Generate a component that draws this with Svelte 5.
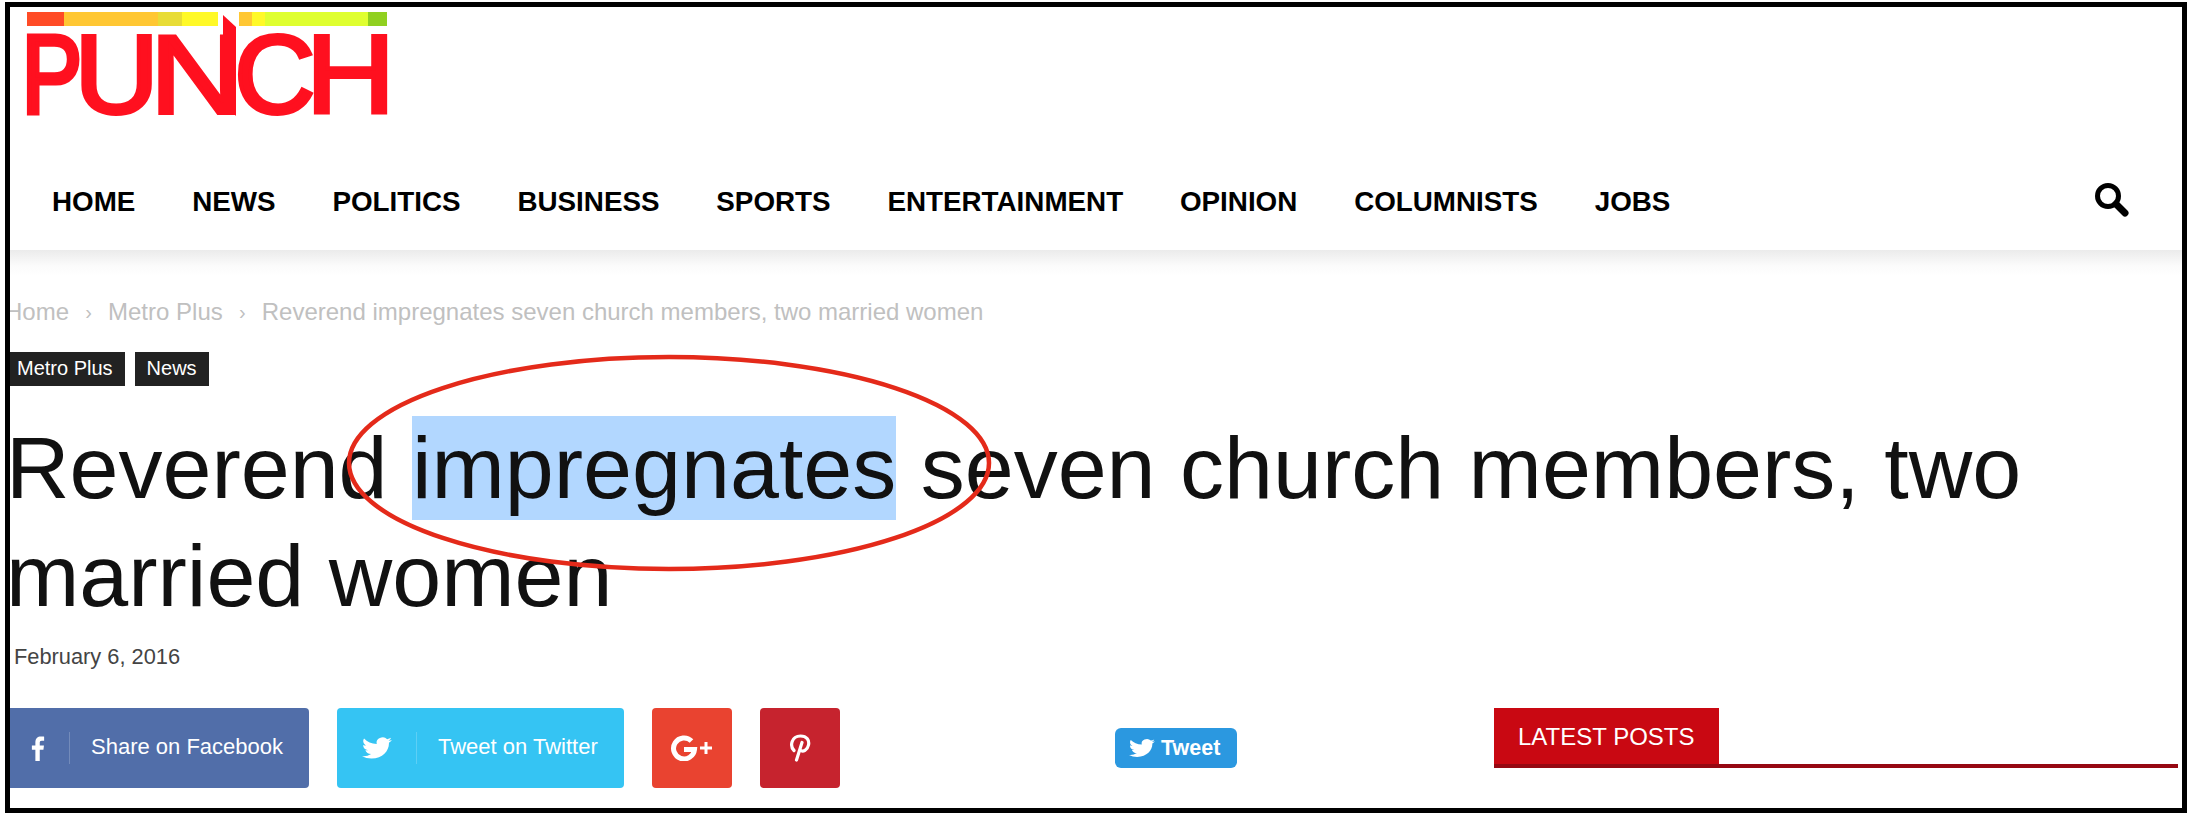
<script>
	const navItems = ['HOME', 'NEWS', 'POLITICS', 'BUSINESS', 'SPORTS', 'ENTERTAINMENT', 'OPINION', 'COLUMNISTS', 'JOBS'];
	const logoLetters = [
		{ ch: 'P', x: -5.6, sx: 0.82, w: 5 },
		{ ch: 'U', x: 47.5, sx: 1.05, w: 4 },
		{ ch: 'N', x: 122.9, sx: 1.17, w: 4 },
		{ ch: 'C', x: 207.3, sx: 1.01, w: 4 },
		{ ch: 'H', x: 279, sx: 1.11, w: 4 }
	];
	const birdPath =
		'M23.95 4.57a10 10 0 0 1-2.82.77 4.96 4.96 0 0 0 2.16-2.72c-.95.56-2 .96-3.12 1.19a4.92 4.92 0 0 0-8.38 4.48C7.69 8.1 4.07 6.13 1.64 3.16a4.82 4.82 0 0 0-.67 2.48c0 1.71.87 3.21 2.19 4.1a4.9 4.9 0 0 1-2.23-.62v.06a4.92 4.92 0 0 0 3.95 4.83 5 5 0 0 1-2.21.08 4.94 4.94 0 0 0 4.6 3.42A9.87 9.87 0 0 1 0 19.54a14 14 0 0 0 7.56 2.21c9.05 0 14-7.5 14-13.98 0-.21 0-.42-.02-.63a9.94 9.94 0 0 0 2.41-2.57z';
</script>

<div class="frame">
	<div class="page">
		<header class="logo-row">
			<svg class="logo" width="362" height="106" viewBox="0 0 362 106" role="img" aria-label="Punch">
				<rect x="0" y="0" width="37" height="14" fill="#ff4b26" />
				<rect x="37" y="0" width="94" height="14" fill="#ffc733" />
				<rect x="131" y="0" width="24" height="14" fill="#e8dc36" />
				<rect x="155" y="0" width="36" height="14" fill="#fff928" />
				<rect x="212" y="0" width="13" height="14" fill="#ffc733" />
				<rect x="225" y="0" width="13" height="14" fill="#fff928" />
				<rect x="238" y="0" width="103" height="14" fill="#dfff30" />
				<rect x="341" y="0" width="19" height="14" fill="#90d020" />
				{#each logoLetters as l}
					<text class="logo-text" stroke-width={l.w} transform="translate({l.x} 101) scale({l.sx} 1)">{l.ch}</text>
				{/each}
				<polygon points="196,3 209,15 209,104 196,90" fill="#ff101f" />
			</svg>
		</header>

		<nav class="nav">
			<ul>
				{#each navItems as item}
					<li>{item}</li>
				{/each}
			</ul>
			<svg class="search" width="34" height="34" viewBox="0 0 34 34" aria-hidden="true">
				<circle cx="13" cy="13" r="10.500" fill="none" stroke="#000" stroke-width="5" />
				<line x1="21" y1="21" x2="30" y2="30" stroke="#000" stroke-width="7" stroke-linecap="round" />
			</svg>
		</nav>

		<div class="breadcrumb">
			<span>Home</span><i>›</i><span>Metro Plus</span><i>›</i><span>Reverend impregnates seven church members, two married women</span>
		</div>

		<div class="tags">
			<span>Metro Plus</span>
			<span>News</span>
		</div>

		<h1>Reverend <span class="selected">impregnates</span> seven church members, two married women</h1>

		<div class="date">February 6, 2016</div>

		<div class="bottom">
			<div class="share">
				<div class="btn facebook">
					<span class="ico">
						<svg width="14" height="25" viewBox="0 0 16 28" preserveAspectRatio="none" aria-hidden="true">
							<path fill="#fff" d="M5 28V15.5H1V10.5h4V7c0-4.300 2.600-6.500 6.300-6.500 1.800 0 3.300.1 3.700.2v4.500h-2.600c-2 0-2.400 1-2.400 2.400v2.900h4.800l-.6 5h-4.200V28z" />
						</svg>
					</span>
					<span class="label">Share on Facebook</span>
				</div>
				<div class="btn twitter">
					<span class="ico">
						<svg width="30" height="26" viewBox="0 0 24 24" preserveAspectRatio="none" aria-hidden="true">
							<path fill="#fff" d={birdPath} />
						</svg>
					</span>
					<span class="label">Tweet on Twitter</span>
				</div>
				<div class="btn square gplus">
					<svg width="42" height="26" viewBox="0 0 42 26" aria-hidden="true">
						<path fill="none" stroke="#fff" stroke-width="5" d="M20.500 6A10.500 10.500 0 1 0 23.500 14.500H13" />
						<path fill="#fff" d="M29 11.500h4.500V7h3v4.500H41v3h-4.500V19h-3v-4.500H29z" />
					</svg>
				</div>
				<div class="btn square pinterest">
					<svg width="22" height="28" viewBox="0 0 22 28" aria-hidden="true">
						<path fill="none" stroke="#fff" stroke-width="3.200" stroke-linecap="round" d="M5 16.500C.5 12 2.500 2 11.500 2c6.500 0 9 4.500 8 9-1 5-5.500 7.500-8.500 5M13 8.500L7.500 26" />
					</svg>
				</div>
			</div>

			<div class="tweet">
				<svg width="26" height="22" viewBox="0 0 24 24" preserveAspectRatio="none" aria-hidden="true">
					<path fill="#fff" d={birdPath} />
				</svg>
				<span>Tweet</span>
			</div>

			<div class="latest">
				<span>LATEST POSTS</span>
			</div>
		</div>

		<svg class="circle" width="660" height="230" viewBox="0 0 660 230" aria-hidden="true">
			<ellipse cx="330" cy="115" rx="320" ry="106" fill="none" stroke="#e42a1a" stroke-width="4.500" />
		</svg>
	</div>
</div>

<style>
	:global(body) {
		margin: 0;
		background: #fff;
		font-family: 'Liberation Sans', Arial, sans-serif;
	}

	.frame {
		box-sizing: border-box;
		width: 2182px;
		height: 811px;
		margin: 2px 0 0 5px;
		border: 5px solid #000;
		overflow: hidden;
	}

	.page {
		position: relative;
		height: 100%;
	}

	.logo-row {
		height: 171px;
		padding: 5px 0 0 17px;
		box-sizing: border-box;
	}

	.logo {
		display: block;
		overflow: visible;
	}

	.logo-text {
		font-family: 'Liberation Sans', Arial, sans-serif;
		font-size: 111px;
		fill: #ff101f;
		stroke: #ff101f;
	}

	.nav {
		position: relative;
		height: 72px;
		display: flex;
		align-items: flex-start;
		justify-content: space-between;
		padding: 5px 53px 0 42px;
		box-sizing: border-box;
		background: #fff;
	}

	/* soft band under the menu */
	.nav::after {
		content: '';
		position: absolute;
		left: 0;
		right: 0;
		top: 100%;
		height: 26px;
		background: linear-gradient(#ebebeb, #fbfbfb 60%, #fff);
	}

	.nav ul {
		display: flex;
		gap: 56.800px;
		margin: 3px 0 0;
		padding: 0;
		list-style: none;
		font-size: 27.800px;
		line-height: 32px;
		font-weight: 700;
		color: #000;
	}

	.breadcrumb {
		margin: 48px 0 0 -5px;
		display: flex;
		font-size: 24px;
		line-height: 28px;
		color: #c0c0c0;
	}

	.breadcrumb i {
		width: 39px;
		text-align: center;
		font-style: normal;
		font-size: 20px;
	}

	.tags {
		display: flex;
		gap: 10px;
		margin-top: 26px;
	}

	.tags span {
		height: 34px;
		line-height: 33px;
		padding: 0 12px 0 7px;
		background: #222;
		color: #fff;
		font-size: 20px;
	}

	.tags span + span {
		padding: 0 12px;
	}

	h1 {
		margin: 28px 0 0 -4px;
		font-size: 88px;
		font-weight: 400;
		line-height: 108px;
		color: #111;
	}

	.selected {
		background: #b2d7ff;
		padding: 2px 0 3px;
	}

	.date {
		margin: 14px 0 0 4px;
		font-size: 21.800px;
		line-height: 26px;
		color: #444;
	}

	.bottom {
		display: flex;
		align-items: flex-start;
		margin-top: 38px;
	}

	.share {
		display: flex;
		gap: 28px;
	}

	.btn {
		height: 80px;
		display: flex;
		align-items: center;
		border-radius: 4px;
		color: #fff;
		font-size: 22px;
	}

	.ico {
		height: 32px;
		display: flex;
		align-items: center;
		justify-content: center;
		box-sizing: border-box;
		border-right: 1px solid rgba(255, 255, 255, 0.2);
	}

	.label {
		white-space: nowrap;
		margin-top: -2px;
	}

	.facebook {
		width: 299px;
		background: #516ea9;
		border-radius: 0 4px 4px 0;
	}
	.facebook .ico {
		width: 60px;
		padding-right: 4px;
	}
	.facebook .label {
		margin-left: 21px;
	}

	.twitter {
		width: 287px;
		background: #35c4f3;
	}
	.twitter .ico {
		width: 80px;
	}
	.twitter .label {
		margin-left: 21px;
	}

	.square {
		width: 80px;
		justify-content: center;
	}
	.gplus {
		background: #e94330;
	}
	.pinterest {
		background: #c6232e;
	}

	.tweet {
		box-sizing: border-box;
		width: 122px;
		height: 40px;
		margin: 20px 0 0 275px;
		padding-left: 14px;
		display: flex;
		align-items: center;
		gap: 6px;
		background: #2b98e0;
		border-radius: 6px;
		color: #fff;
		font-size: 21.500px;
		font-weight: 700;
	}

	.latest {
		flex: 1;
		margin-left: 257px;
		margin-right: 4px;
		height: 60px;
		border-bottom: 4px solid #960812;
		box-sizing: border-box;
	}

	.latest span {
		display: block;
		width: 225px;
		height: 56px;
		line-height: 58px;
		box-sizing: border-box;
		padding-left: 24px;
		background: #c90812;
		color: #fff;
		font-size: 24px;
		white-space: nowrap;
	}

	.circle {
		position: absolute;
		left: 329px;
		top: 341px;
		pointer-events: none;
	}
</style>
